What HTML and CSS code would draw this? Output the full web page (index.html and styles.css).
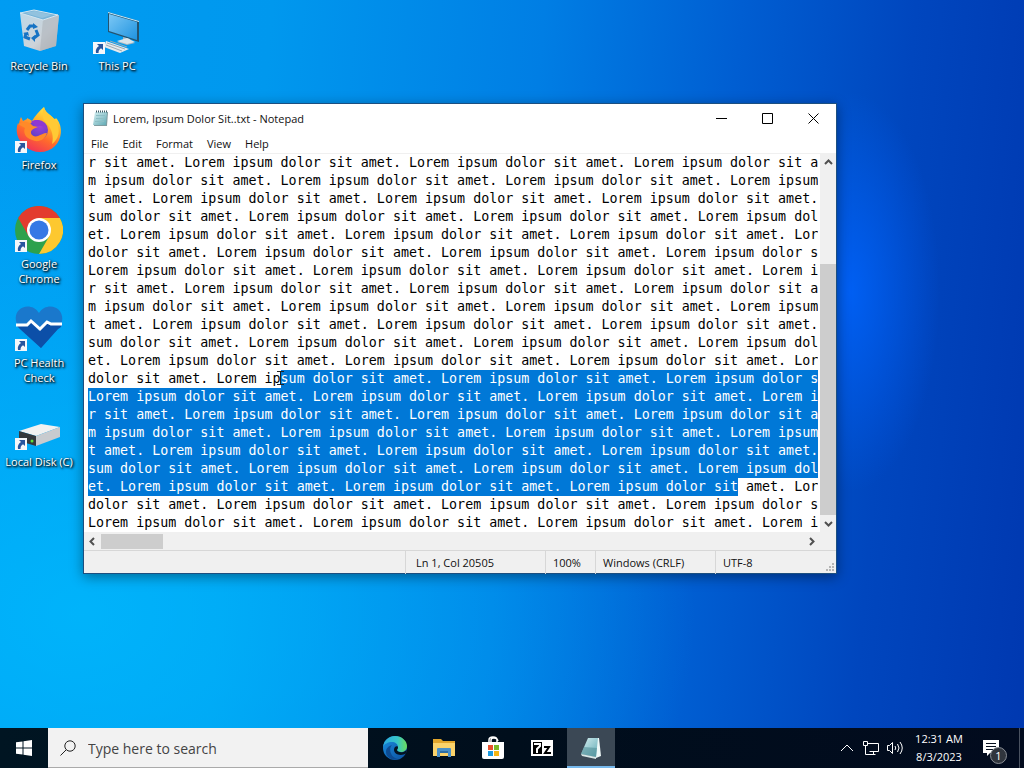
FILE: index.html
```html
<!DOCTYPE html>
<html lang="en">
<head>
<meta charset="utf-8">
<title>Desktop</title>
<link rel="stylesheet" href="styles.css">
</head>
<body>
<svg class="defs" aria-hidden="true">
  <defs>
    <linearGradient id="binFront" x1="0" y1="0" x2="1" y2="1"><stop offset="0" stop-color="#bcd8e8"/><stop offset="0.6" stop-color="#cdd3d9"/><stop offset="1" stop-color="#b3aeb0"/></linearGradient>
    <linearGradient id="screen" x1="0" y1="0" x2="1" y2="1"><stop offset="0" stop-color="#7cc8f5"/><stop offset="1" stop-color="#1f93e0"/></linearGradient>
    <linearGradient id="fox" x1="0.8" y1="0" x2="0.3" y2="1"><stop offset="0" stop-color="#fff04a"/><stop offset="0.35" stop-color="#ffb52a"/><stop offset="0.65" stop-color="#ff6a2c"/><stop offset="1" stop-color="#f0305a"/></linearGradient>
    <radialGradient id="globe" cx="0.6" cy="0.3" r="0.8"><stop offset="0" stop-color="#a03fd8"/><stop offset="1" stop-color="#4a40c0"/></radialGradient>
    <linearGradient id="edgeTop" x1="0" y1="0" x2="1" y2="0"><stop offset="0" stop-color="#2ba9e0"/><stop offset="0.6" stop-color="#37c6c8"/><stop offset="1" stop-color="#6bdc5a"/></linearGradient>
    <linearGradient id="edgeLow" x1="0" y1="0" x2="1" y2="1"><stop offset="0" stop-color="#1a8fe0"/><stop offset="1" stop-color="#0c4f9e"/></linearGradient>
    <linearGradient id="pad" x1="0" y1="0" x2="1" y2="1"><stop offset="0" stop-color="#d8f0f2"/><stop offset="1" stop-color="#5fa9b4"/></linearGradient>
    <symbol id="shortcut" viewBox="0 0 12 12"><path fill="#f5f7fa" d="M0 0h12v12H0z"/><path fill="#28559e" d="M4 2h6v6L8 6.200C6 7.500 5.500 8.500 5.500 11H3C2.300 8 3.500 5.500 6 4z"/></symbol>
  </defs>
</svg>

<main class="desktop">
  <nav class="icons" aria-label="Desktop">
    <a class="icon" href="#bin">
      <svg viewBox="0 0 48 48"><path fill="url(#binFront)" d="M5 5l4 33 16 5 16-5 3-31-16 4z"/><path fill="#aeb4bb" d="M28 11l-3 32 16-5 3-31z" opacity=".6"/><path fill="#78b4d8" stroke="#d4e6f0" d="M5 5l14-3 24 5-15 5z"/><path fill="#92c2de" d="M10 5l10-2 17 4-10 3z"/><g fill="none" stroke="#1673c4" stroke-width="3"><path d="M12 22l3-4h4"/><path d="M21 22l2 5-4 3"/><path d="M15 31l-5-2 1-4"/></g><path fill="#1673c4" d="M18 15l5 4-5 2zM20 27v7l-4-4zM8 25l5-1 1 4z"/></svg>
      <span>Recycle Bin</span>
    </a>
    <a class="icon" href="#pc">
      <svg viewBox="0 0 48 48"><path fill="#24536f" d="M15 4l31 9v21L15 24z"/><path fill="#c7edff" d="M15 4l31 9v1L15 5z"/><path fill="url(#screen)" d="M16 6l28 8v18l-28-9z"/><path fill="#a7b7c1" d="M30 29l7 2v2l5 2-8 2-10-3 6-2z"/><path fill="#dce5ea" d="M24 33l10-3 8 4-8 2z"/><path fill="#e6eaed" d="M13 33l23 8-9 4-16-6z"/><path fill="none" stroke="#9aabb5" d="M14 35l18 6M17 33l17 6M13 37l16 6"/><use href="#shortcut" x="0" y="34" width="12" height="12"/></svg>
      <span>This PC</span>
    </a>
    <a class="icon" href="#firefox">
      <svg viewBox="0 0 48 48"><path fill="url(#fox)" d="M29 0c1 6 7 8 10 12 1 0 2-1 3 0 6 8 5 20-2 27-8 8-22 8-30 0C2 33 0 23 3 16l1 2c0-3 1-6 2-8l2 4 4-2v-1c2 1 4 2 5 3 3-5 7-10 12-14z"/><circle cx="23" cy="23" r="10" fill="url(#globe)"/><path fill="#ff8a29" d="M3 17c5-3 11-3 15 2l5 1c-3 1-5 2-6 3-3 3 1 8 6 6 3-1 5-3 9-3-2 7-9 10-15 7-7-2-9-8-7-12z"/><path fill="#ffca35" d="M29 0c1 6 8 8 12 14 5 9 3 18-4 23 2-7 0-15-5-20-4-4-6-9-3-17z"/><path fill="#8f38d2" d="M16 15c6-5 15 0 16 8-3-4-6-5-10-4z"/><use href="#shortcut" x="0" y="34" width="12" height="12"/></svg>
      <span>Firefox</span>
    </a>
    <a class="icon" href="#chrome">
      <svg viewBox="0 0 48 48"><circle cx="24" cy="24" r="24" fill="#2da14c"/><path fill="#e33b2e" d="M3.200 12A24 24 0 0 1 44.800 12H24L13.600 30z"/><path fill="#fdc82f" d="M44.800 12A24 24 0 0 1 24 48l10.400-18L24 12z"/><circle cx="24" cy="24" r="12" fill="#fff"/><circle cx="24" cy="24" r="9.500" fill="#3578e5"/><use href="#shortcut" x="0" y="34" width="12" height="12"/></svg>
      <span>Google Chrome</span>
    </a>
    <a class="icon" href="#health">
      <svg viewBox="0 0 48 48"><path fill="#1a78cc" d="M24 8c5-8 15-8 20-3 5 6 4 14-1 19L26 43 5 24C0 18-1 10 4 5 9 0 19 0 24 8z"/><path fill="#0c4fa8" d="M1 20h10l4-4 9 10 7-8 5 2h11c-1 2-2 3-4 4L26 43 5 24z"/><path fill="none" stroke="#fff" stroke-width="3" d="M1 20h11l4-4 9 8 7-7 4 2h11"/><use href="#shortcut" x="0" y="34" width="12" height="12"/></svg>
      <span>PC Health Check</span>
    </a>
    <a class="icon" href="#disk">
      <svg viewBox="0 0 48 48"><path fill="#f1f1f1" d="M4 27l22-7 19 3-24 9z"/><path fill="#c8cbcf" d="M21 32l24-9v10l-24 9z"/><path fill="#35383c" d="M4 27l17 5v10L4 37z"/><circle cx="17" cy="37" r="1.500" fill="#5ee03c"/><use href="#shortcut" x="0" y="34" width="12" height="12"/></svg>
      <span>Local Disk (C)</span>
    </a>
  </nav>

  <section class="window" aria-label="Notepad">
    <header class="titlebar">
      <svg class="app-icon" viewBox="0 0 16 16"><path fill="#7f9ca0" d="M3 2h12l-1 14H1z"/><path fill="url(#pad)" d="M2 2h12l-1 13H0z"/><path stroke="#3d5d66" stroke-dasharray="1 1" stroke-width="2" d="M3 1.500h12"/><path stroke="#8dbfc5" d="M3 5.500h9M3 8.500h9M2 11.500h9"/></svg>
      <h1>Lorem, Ipsum Dolor Sit..txt - Notepad</h1>
      <div class="controls">
        <button type="button" aria-label="Minimize"><svg viewBox="0 0 11 11"><path d="M0 5.500h11"/></svg></button>
        <button type="button" aria-label="Maximize"><svg viewBox="0 0 11 11"><path d="M.5.5h10v10H.5z"/></svg></button>
        <button type="button" aria-label="Close"><svg viewBox="0 0 11 11"><path d="M.5.5l10 10M10.500.5l-10 10"/></svg></button>
      </div>
    </header>
    <nav class="menubar" aria-label="Menu">
      <button type="button">File</button>
      <button type="button">Edit</button>
      <button type="button">Format</button>
      <button type="button">View</button>
      <button type="button">Help</button>
    </nav>
    <div class="editor">
      <textarea id="document" rows="21" wrap="off" spellcheck="false" aria-label="Document text">r sit amet. Lorem ipsum dolor sit amet. Lorem ipsum dolor sit amet. Lorem ipsum dolor sit a
m ipsum dolor sit amet. Lorem ipsum dolor sit amet. Lorem ipsum dolor sit amet. Lorem ipsum
t amet. Lorem ipsum dolor sit amet. Lorem ipsum dolor sit amet. Lorem ipsum dolor sit amet.
sum dolor sit amet. Lorem ipsum dolor sit amet. Lorem ipsum dolor sit amet. Lorem ipsum dol
et. Lorem ipsum dolor sit amet. Lorem ipsum dolor sit amet. Lorem ipsum dolor sit amet. Lor
dolor sit amet. Lorem ipsum dolor sit amet. Lorem ipsum dolor sit amet. Lorem ipsum dolor s
Lorem ipsum dolor sit amet. Lorem ipsum dolor sit amet. Lorem ipsum dolor sit amet. Lorem i
r sit amet. Lorem ipsum dolor sit amet. Lorem ipsum dolor sit amet. Lorem ipsum dolor sit a
m ipsum dolor sit amet. Lorem ipsum dolor sit amet. Lorem ipsum dolor sit amet. Lorem ipsum
t amet. Lorem ipsum dolor sit amet. Lorem ipsum dolor sit amet. Lorem ipsum dolor sit amet.
sum dolor sit amet. Lorem ipsum dolor sit amet. Lorem ipsum dolor sit amet. Lorem ipsum dol
et. Lorem ipsum dolor sit amet. Lorem ipsum dolor sit amet. Lorem ipsum dolor sit amet. Lor
dolor sit amet. Lorem ipsum dolor sit amet. Lorem ipsum dolor sit amet. Lorem ipsum dolor s
Lorem ipsum dolor sit amet. Lorem ipsum dolor sit amet. Lorem ipsum dolor sit amet. Lorem i
r sit amet. Lorem ipsum dolor sit amet. Lorem ipsum dolor sit amet. Lorem ipsum dolor sit a
m ipsum dolor sit amet. Lorem ipsum dolor sit amet. Lorem ipsum dolor sit amet. Lorem ipsum
t amet. Lorem ipsum dolor sit amet. Lorem ipsum dolor sit amet. Lorem ipsum dolor sit amet.
sum dolor sit amet. Lorem ipsum dolor sit amet. Lorem ipsum dolor sit amet. Lorem ipsum dol
et. Lorem ipsum dolor sit amet. Lorem ipsum dolor sit amet. Lorem ipsum dolor sit amet. Lor
dolor sit amet. Lorem ipsum dolor sit amet. Lorem ipsum dolor sit amet. Lorem ipsum dolor s
Lorem ipsum dolor sit amet. Lorem ipsum dolor sit amet. Lorem ipsum dolor sit amet. Lorem i</textarea>
      <div class="vscroll">
        <button type="button" aria-label="Scroll up"><svg viewBox="0 0 9 9"><path d="M1 6l3.500-3.500L8 6"/></svg></button>
        <div class="vtrack"><div class="vthumb"></div></div>
        <button type="button" aria-label="Scroll down"><svg viewBox="0 0 9 9"><path d="M1 3l3.500 3.500L8 3"/></svg></button>
      </div>
      <div class="hscroll">
        <button type="button" aria-label="Scroll left"><svg viewBox="0 0 9 9"><path d="M6 1L2.500 4.500 6 8"/></svg></button>
        <div class="htrack"><div class="hthumb"></div></div>
        <button type="button" aria-label="Scroll right"><svg viewBox="0 0 9 9"><path d="M3 1l3.500 3.500L3 8"/></svg></button>
      </div>
      <svg class="ibeam" viewBox="0 0 7 14" aria-hidden="true"><path d="M0 .5h7M3.500 1v12M0 13.500h7"/></svg>
    </div>
    <footer class="statusbar">
      <span></span>
      <span>Ln 1, Col 20505</span>
      <span>100%</span>
      <span>Windows (CRLF)</span>
      <span>UTF-8</span>
      <svg class="grip" viewBox="0 0 8 8"><path fill="#b5b5b5" d="M6 0h2v2H6zM3 3h2v2H3zM6 3h2v2H6zM0 6h2v2H0zM3 6h2v2H3zM6 6h2v2H6z"/></svg>
    </footer>
  </section>
</main>

<footer class="taskbar">
  <button class="start" type="button" aria-label="Start"><svg viewBox="0 0 16 16"><path fill="#fff" d="M0 2.300L6.500 1.400v6.100H0zM7.500 1.200L16 0v7.500H7.500zM0 8.500h6.500v6.100L0 13.700zM7.500 8.500H16V16l-8.500-1.200z"/></svg></button>
  <label class="search"><svg viewBox="0 0 16 16"><circle cx="10" cy="6" r="5.200"/><path d="M6.300 9.700L.5 15.500"/></svg><input type="text" placeholder="Type here to search" aria-label="Search"></label>
  <div class="apps">
    <button type="button" aria-label="Edge"><svg viewBox="0 0 24 24"><circle cx="12" cy="12" r="12" fill="url(#edgeLow)"/><path fill="url(#edgeTop)" d="M0 11C1 4 6 0 12 0c7 0 12 5 12 10 0 4-3 6-6 6-2 0-4-1-4-2s1-1 1-3c0-3-3-5-6-5C5 6 1 8 0 11z"/><path fill="#0d4c93" d="M9 9c-4 4-1 13 6 14-6 2-12-2-12-7 0-4 3-6 6-7z"/><path fill="#041322" d="M15 11c0 2-1 2-1 3s2 2.500 5 2.200c2-.2 4-1.200 5-2.700l-1 4c-2 1-5 2-8 1-4-1-5-5-3-7.500 1-1.300 3-1 3 0z"/></svg></button>
    <button type="button" aria-label="File Explorer"><svg viewBox="0 0 24 24"><path fill="#e2a62c" d="M1 3h8l2 2h12v5H1z"/><path fill="#fbd36b" d="M1 7h22v13H1z"/><path fill="#4a90c8" d="M5 13q0-1 1-1h12q1 0 1 1v8h-3v-4H8v4H5z"/><path fill="#2e6ea4" d="M8 15h8v2H8z"/></svg></button>
    <button type="button" aria-label="Microsoft Store"><svg viewBox="0 0 24 24"><path fill="none" stroke="#fff" stroke-width="1.500" d="M8 7V4q0-3 4-3t4 3v3M10 7V4q0-2 3-2t4 3"/><path fill="#fff" d="M1 6h22v15q0 2-2 2H3q-2 0-2-2z"/><path fill="#e8502d" d="M7 9h5v5H7z"/><path fill="#7cb928" d="M13 9h5v5h-5z"/><path fill="#1c9be0" d="M7 15h5v5H7z"/><path fill="#f5b515" d="M13 15h5v5h-5z"/></svg></button>
    <button type="button" aria-label="7-Zip"><svg viewBox="0 0 24 24"><path fill="#fff" d="M1 4h22v16H1z"/><path fill="#000" d="M3 6h9v12H3z"/><path fill="none" stroke="#fff" stroke-width="2" d="M4 8h6v2l-3 3v4"/><path fill="none" stroke="#000" stroke-width="2" d="M14 11h5l-4 6h6"/></svg></button>
    <button class="active" type="button" aria-label="Notepad"><svg viewBox="0 0 24 24"><path fill="#eef8f8" d="M9 2h11l2 18-5 2z"/><path fill="url(#pad)" d="M9 2h10l-2 19L2 18z"/><path fill="#4c8a94" d="M5 11l13 1-1 9L2 18z" opacity=".55"/><path fill="#d9e8e8" d="M2 18l15 3v2L3 20z"/></svg></button>
  </div>
  <div class="tray">
    <button class="tray-icon" type="button" aria-label="Show hidden icons"><svg viewBox="0 0 16 16"><path d="M2 11l6-6 6 6"/></svg></button>
    <button class="tray-icon" type="button" aria-label="Network"><svg viewBox="0 0 16 16"><path d="M4.500 3.500h11v8h-9M.5 1.500h4v4h-4zM2.500 5.500v9M2.500 14.500h10M10.500 11.500v3"/></svg></button>
    <button class="tray-icon" type="button" aria-label="Volume"><svg viewBox="0 0 16 16"><path d="M.5 5.500h2l3-3v11l-3-3h-2zM8 6q1.500 2 0 4M10.500 4q3 4 0 8M13 2q4.500 6 0 12"/></svg></button>
    <time class="clock" datetime="2023-08-03T00:31"><span>12:31 AM</span><span>8/3/2023</span></time>
    <button class="notify" type="button" aria-label="Notifications"><svg viewBox="0 0 16 16"><path fill="#fff" d="M0 0h16v13h-9l-3 3v-3H0z"/><path stroke="#07101f" d="M3 3.500h10M3 6.500h10M3 9.500h7"/></svg><span class="badge">1</span></button>
    <div class="peek"></div>
  </div>
</footer>
<script src="selection.js"></script>
</body>
</html>
```
FILE: styles.css
```css
* { box-sizing: border-box; }

html, body { height: 100%; margin: 0; }

body {
  display: flex;
  flex-direction: column;
  overflow: hidden;
  font-family: "Open Sans", "Noto Sans", sans-serif;
  font-size: 11px;
  line-height: 15px;
  color: #111;
  background:
    radial-gradient(ellipse 90px 200px at 83% 38%, rgba(0, 100, 255, 0.8), rgba(0, 90, 240, 0) 100%),
    radial-gradient(ellipse 60% 60% at 8% 80%, rgba(0, 190, 255, 0.7), rgba(0, 190, 255, 0) 100%),
    linear-gradient(95deg, #009cf2 0%, #0098ee 25%, #007ee4 50%, #005ed2 68%, #0046be 84%, #0038b0 100%);
}

button {
  display: grid;
  place-items: center;
  margin: 0;
  padding: 0;
  border: 0;
  background: none;
  color: inherit;
  font: inherit;
}

svg { display: block; }

.defs { position: absolute; width: 0; height: 0; }

.desktop { position: relative; flex: 1; min-height: 0; }

.icons {
  display: grid;
  grid-template-columns: 78px 78px;
  grid-auto-rows: 99px;
  padding-top: 8px;
}

.icon {
  display: flex;
  flex-direction: column;
  align-items: center;
  gap: 2px;
  grid-column: 1;
  color: #fff;
  text-align: center;
  text-decoration: none;
  text-shadow: 1px 1px 2px #000, 1px 1px 3px #000;
}

.icon:nth-child(2) { grid-column: 2; grid-row: 1; }
.icon svg { width: 48px; height: 48px; }
.icon span { padding: 0 2px; }

.window {
  position: absolute;
  left: 83px;
  top: 103px;
  width: 754px;
  border: 1px solid #1c4f80;
  background: #fff;
  box-shadow: 0 3px 12px rgba(0, 0, 0, 0.4);
}

.titlebar { display: flex; align-items: center; height: 28px; padding-left: 9px; }
.titlebar h1 { flex: 1; margin: 0 0 0 4px; font-size: 11px; font-weight: 400; }
.app-icon { width: 16px; height: 16px; }
.controls { display: flex; }
.controls button { width: 46px; height: 28px; }
.controls svg { width: 11px; height: 11px; fill: none; stroke: #000; }

.menubar { display: flex; height: 22px; padding-top: 2px; border-bottom: 1px solid #f0f0f0; }
.menubar button { padding: 0 7px; }

.editor {
  position: relative;
  display: grid;
  grid-template-columns: 1fr 16px;
  background: #f0f0f0;
}

.editor textarea {
  justify-self: stretch;
  padding: 0;
  border: solid #fff;
  border-width: 0 2px 0 4px;
  outline: 0;
  resize: none;
  overflow: hidden;
  background: #fff;
  color: #000;
  font: 10pt/18px "DejaVu Sans Mono", monospace;
  white-space: pre;
}

.editor textarea::selection { background: #0078d7; color: #fff; }

.vscroll { display: flex; flex-direction: column; }
.vscroll button { width: 16px; height: 17px; }
.vtrack { display: flex; flex-direction: column; justify-content: flex-end; flex: 1; }
.vthumb { height: 73%; background: #cdcdcd; }

.hscroll { display: flex; height: 18px; align-items: center; }
.hscroll button { width: 17px; height: 18px; }
.htrack { flex: 1; }
.hthumb { width: 62px; height: 15px; background: #cdcdcd; }
.vscroll svg, .hscroll svg { width: 9px; height: 9px; fill: none; stroke: #505050; stroke-width: 2; }

.ibeam {
  position: absolute;
  left: 193px;
  top: 217px;
  width: 7px;
  height: 14px;
  fill: none;
  stroke: #222;
}

.statusbar {
  position: relative;
  display: grid;
  grid-template-columns: 1fr 140px 50px 120px 121px;
  height: 23px;
  border-top: 1px solid #d7d7d7;
  background: #f0f0f0;
}

.statusbar span { padding: 4px 7px; border-left: 1px solid #d7d7d7; }
.statusbar span:first-child { border: 0; }
.statusbar span:nth-child(2) { padding-left: 10px; }
.grip { position: absolute; right: 2px; bottom: 2px; width: 8px; height: 8px; }

.taskbar {
  display: flex;
  height: 40px;
  background: linear-gradient(90deg, #001522, #000e1c 50%, #020b1e);
  color: #fff;
}

.start { width: 48px; }
.start svg { width: 16px; height: 16px; }

.search {
  display: flex;
  align-items: center;
  gap: 12px;
  width: 320px;
  padding: 0 12px;
  border-bottom: 1px solid #aaa;
  background: #f2f2f2;
}

.search svg { width: 16px; height: 16px; fill: none; stroke: #222; }

.search input {
  flex: 1;
  min-width: 0;
  padding: 2px 0 0;
  border: 0;
  outline: 0;
  background: none;
  font: 14px/20px "Open Sans", "Noto Sans", sans-serif;
}

.search input::placeholder { color: #444; opacity: 1; }

.apps { display: flex; gap: 1px; margin-left: 3px; }
.apps button { width: 48px; height: 40px; }
.apps svg { width: 24px; height: 24px; }
.apps .active { background: #3b4855; box-shadow: inset 0 -2px #76b9ed; }

.tray { display: flex; align-items: center; margin-left: auto; }
.tray-icon { width: 24px; height: 40px; }
.tray-icon svg { width: 16px; height: 16px; fill: none; stroke: #fff; }

.clock {
  display: flex;
  flex-direction: column;
  width: 64px;
  text-align: center;
  line-height: 18px;
}

.notify { position: relative; width: 48px; height: 40px; padding-right: 8px; }
.notify svg { width: 16px; height: 16px; }

.badge {
  position: absolute;
  right: 12px;
  bottom: 4px;
  width: 17px;
  height: 17px;
  border: 1px solid #8a8f96;
  border-radius: 50%;
  background: #30353d;
  line-height: 15px;
}

.peek { width: 5px; height: 40px; border-left: 1px solid #4a5260; }
```
FILE: selection.js
```js
const editor = document.getElementById('document');
const lines = editor.value.split('\n');
const offset = (row, column) =>
  lines.slice(0, row).reduce((total, line) => total + line.length + 1, 0) + column;
editor.focus();
editor.setSelectionRange(offset(12, 24), offset(18, 81), 'backward');
```
